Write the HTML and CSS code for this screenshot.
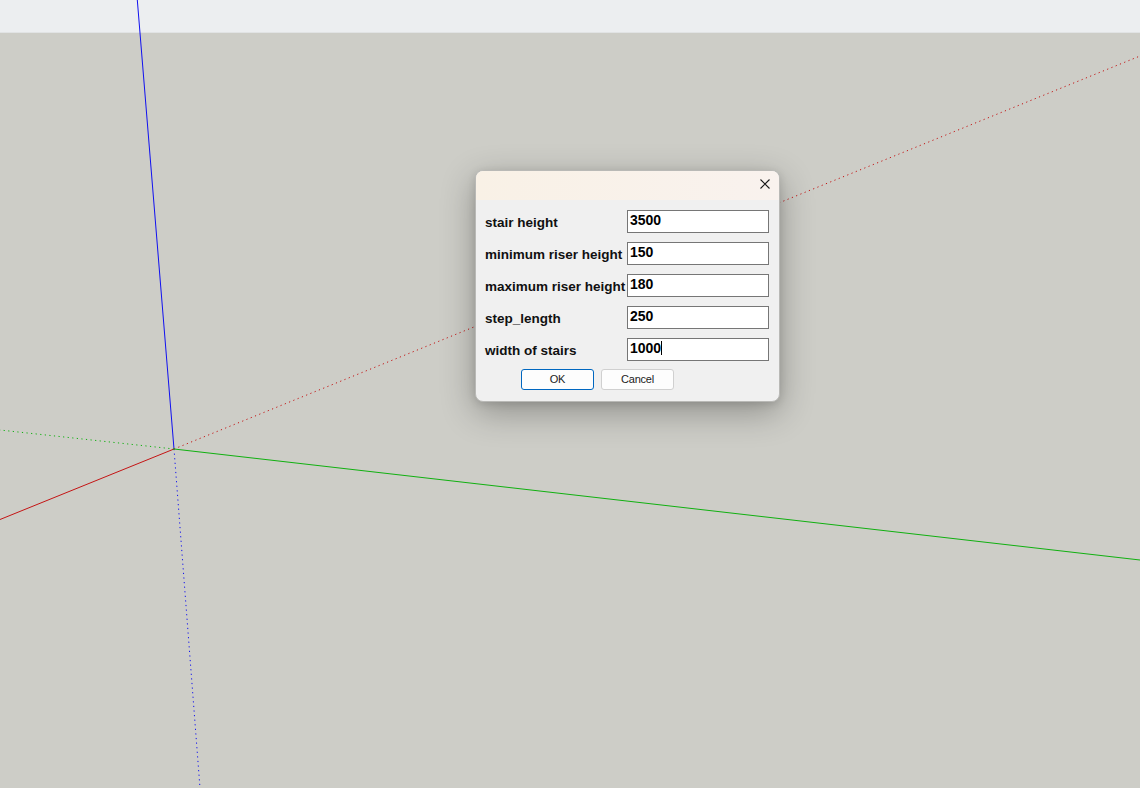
FILE: index.html
```html
<!DOCTYPE html>
<html lang="en">
<head>
<meta charset="utf-8">
<title>Stairs</title>
<link rel="stylesheet" href="styles.css">
</head>
<body>
<div class="viewport">
  <div class="sky"></div>
  <div class="ground"></div>
  <svg class="axes" width="1140" height="788" viewBox="0 0 1140 788">
    <line x1="137.3" y1="0" x2="174" y2="449" class="ax blue"/>
    <line x1="174" y1="449" x2="200" y2="788" class="ax blue dot"/>
    <line x1="174" y1="449" x2="0" y2="519.5" class="ax red"/>
    <line x1="174" y1="449" x2="1140" y2="56" class="ax red dot"/>
    <line x1="174" y1="449" x2="1140" y2="560" class="ax green"/>
    <line x1="174" y1="449" x2="0" y2="430" class="ax green dot"/>
  </svg>

  <div class="dialog">
    <div class="titlebar">
      <svg class="close" width="10" height="10" viewBox="0 0 10 10"><path d="M0.5 0.5 L9.5 9.5 M9.5 0.5 L0.5 9.5" stroke="#1b1b1b" stroke-width="1.1" fill="none"/></svg>
    </div>
    <div class="body">
      <div class="row"><span class="label">stair height</span><div class="field">3500</div></div>
      <div class="row"><span class="label">minimum riser height</span><div class="field">150</div></div>
      <div class="row"><span class="label">maximum riser height</span><div class="field">180</div></div>
      <div class="row"><span class="label">step_length</span><div class="field">250</div></div>
      <div class="row"><span class="label">width of stairs</span><div class="field">1000<span class="caret"></span></div></div>
      <div class="buttons">
        <button class="btn default">OK</button>
        <button class="btn">Cancel</button>
      </div>
    </div>
  </div>
</div>
</body>
</html>
```

FILE: styles.css
```css
html, body {
  margin: 0;
  padding: 0;
}
body {
  width: 1140px;
  height: 788px;
  overflow: hidden;
  font-family: "Liberation Sans", Arial, sans-serif;
}
.viewport {
  position: relative;
  width: 1140px;
  height: 788px;
  display: flex;
  flex-direction: column;
  overflow: hidden;
}
.sky {
  height: 33px;
  background: #eceef0;
  border-bottom: 1px solid #e1e3e4;
  box-sizing: border-box;
}
.ground {
  flex: 1;
  background: #cdcdc7;
}
.axes {
  position: absolute;
  left: 0;
  top: 0;
}
.ax {
  stroke-width: 1;
  fill: none;
}
.blue { stroke: #1010f0; }
.red { stroke: #c41414; }
.green { stroke: #10b010; }
.dot { stroke-dasharray: 1.2 3.4; }

.dialog {
  position: absolute;
  left: 475px;
  top: 170px;
  width: 305px;
  height: 232px;
  box-sizing: border-box;
  border-radius: 8px;
  overflow: hidden;
  border: 1px solid #b9b9b6;
  background: #f0f0f0;
  box-shadow: 0 10px 34px rgba(0, 0, 0, 0.30), 0 2px 8px rgba(0, 0, 0, 0.12);
  display: flex;
  flex-direction: column;
}
.titlebar {
  height: 29px;
  background: linear-gradient(90deg, #f9f1e6, #f9f2ee);
  display: flex;
  justify-content: flex-end;
  align-items: flex-start;
  padding: 8px 9px 0 0;
  box-sizing: border-box;
}
.close {
  display: block;
}
.body {
  display: flex;
  flex-direction: column;
  padding: 10px 10px 0 9px;
  gap: 9px;
}
.row {
  display: flex;
  align-items: center;
  height: 23px;
}
.label {
  width: 142px;
  flex: none;
  font-weight: bold;
  font-size: 13.5px;
  line-height: 16px;
  padding-top: 2px;
  color: #111;
  white-space: nowrap;
}
.field {
  width: 142px;
  height: 23px;
  box-sizing: border-box;
  border: 1px solid #767676;
  background: #ffffff;
  padding: 1px 2px 0 2px;
  font-weight: bold;
  font-size: 14px;
  line-height: 16px;
  color: #000;
  display: flex;
  align-items: flex-start;
}
.caret {
  display: inline-block;
  width: 1px;
  height: 14px;
  margin-top: 1px;
  background: #000;
}
.buttons {
  display: flex;
  gap: 7px;
  margin-left: 36px;
  margin-top: -1px;
}
.btn {
  width: 73px;
  height: 21px;
  box-sizing: border-box;
  margin: 0;
  padding: 0;
  border: 1px solid #d0d0d0;
  border-radius: 3px;
  background: #fdfdfd;
  font-family: "Liberation Sans", Arial, sans-serif;
  font-size: 11px;
  letter-spacing: -0.2px;
  color: #1b1b1b;
  line-height: 19px;
}
.btn.default {
  border-color: #0067c0;
}
```
